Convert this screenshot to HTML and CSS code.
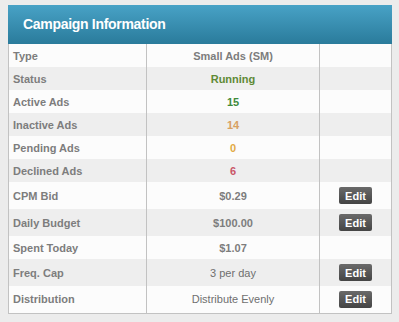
FILE: index.html
```html
<!DOCTYPE html>
<html>
<head>
    <title>Campaign Information</title>
    <link rel="stylesheet" href="styles.css">
</head>
<body>
    <div class="panel">
        <div class="panel-head">Campaign Information</div>
        <table class="info">
            <tr>
                <td class="label">Type</td>
                <td class="value">Small Ads (SM)</td>
                <td class="action"></td>
            </tr>
            <tr>
                <td class="label">Status</td>
                <td class="value running">Running</td>
                <td class="action"></td>
            </tr>
            <tr>
                <td class="label">Active Ads</td>
                <td class="value active">15</td>
                <td class="action"></td>
            </tr>
            <tr>
                <td class="label">Inactive Ads</td>
                <td class="value inactive">14</td>
                <td class="action"></td>
            </tr>
            <tr>
                <td class="label">Pending Ads</td>
                <td class="value pending">0</td>
                <td class="action"></td>
            </tr>
            <tr>
                <td class="label">Declined Ads</td>
                <td class="value declined">6</td>
                <td class="action"></td>
            </tr>
            <tr class="tall">
                <td class="label">CPM Bid</td>
                <td class="value">$0.29</td>
                <td class="action"><button class="edit">Edit</button></td>
            </tr>
            <tr class="tall">
                <td class="label">Daily Budget</td>
                <td class="value">$100.00</td>
                <td class="action"><button class="edit">Edit</button></td>
            </tr>
            <tr>
                <td class="label">Spent Today</td>
                <td class="value">$1.07</td>
                <td class="action"></td>
            </tr>
            <tr class="tall">
                <td class="label">Freq. Cap</td>
                <td class="value plain">3 per day</td>
                <td class="action"><button class="edit">Edit</button></td>
            </tr>
            <tr class="tall">
                <td class="label">Distribution</td>
                <td class="value plain">Distribute Evenly</td>
                <td class="action"><button class="edit">Edit</button></td>
            </tr>
        </table>
    </div>
</body>
</html>
```

FILE: styles.css
```css
body {
    font-family: Arial, "Liberation Sans", sans-serif;
    background-color: #ececec;
    margin: 5px 7px 0 8px;
}

.panel {
    width: 384px;
}

.panel-head {
    height: 39px;
    line-height: 39px;
    padding-left: 15px;
    background: linear-gradient(to bottom, #48a2c6, #2a7b9b);
    color: #fff;
    font-size: 14px;
    font-weight: bold;
    letter-spacing: -0.3px;
}

.info {
    width: 384px;
    border-collapse: collapse;
    border: 1px solid #c2c2c2;
    border-top: none;
    font-size: 11px;
    font-weight: bold;
    color: #7d7d7d;
}

.info tr {
    height: 23px;
    background-color: #fcfcfc;
}

.info tr:nth-child(even) {
    background-color: #eeeeee;
}

.info tr.tall {
    height: 27px;
}

.info td {
    padding: 0;
    vertical-align: middle;
}

.label {
    width: 133px;
    padding-left: 4px !important;
    border-right: 1px solid #c2c2c2;
}

.value {
    width: 172px;
    text-align: center;
    border-right: 1px solid #c2c2c2;
}

.value.plain {
    font-weight: normal;
    color: #6f6f6f;
}

.action {
    text-align: center;
}

.running {
    color: #5e8a35;
}

.active {
    color: #3f8a3a;
}

.inactive {
    color: #d8a062;
}

.pending {
    color: #e2aa45;
}

.declined {
    color: #c95668;
}

.edit {
    width: 33px;
    height: 17px;
    padding: 0;
    border: none;
    border-radius: 2px;
    background: linear-gradient(to bottom, #6a6a6a, #444);
    color: #fff;
    font-family: Arial, "Liberation Sans", sans-serif;
    font-size: 11px;
    font-weight: bold;
    vertical-align: middle;
}
```
